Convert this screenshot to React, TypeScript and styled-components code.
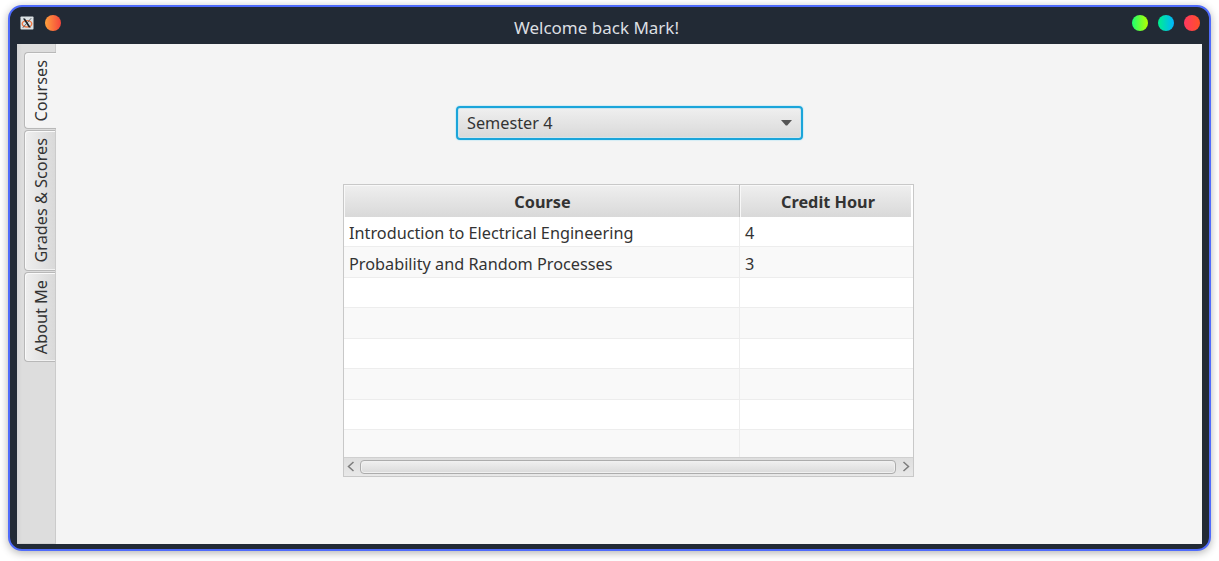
import React from 'react';
import styled, { createGlobalStyle } from 'styled-components';

const GlobalStyle = createGlobalStyle`
  * { box-sizing: border-box; }
  body {
    margin: 0;
    background: #fff;
    overflow: hidden;
    font-family: 'Noto Sans', sans-serif;
    font-size: 16.25px;
    color: #333;
  }
`;

const Desktop = styled.div`
  width: 1219px;
  height: 561px;
  padding: 5px 8px 10px;
`;

const Window = styled.main`
  width: 1203px;
  height: 546px;
  display: flex;
  flex-direction: column;
  padding: 0 7px 5px;
  border: 2px solid #4f6bfb;
  border-radius: 14px;
  background: #222a35;
  box-shadow: 0 2px 8px rgba(0, 0, 0, 0.3);
`;

const TitleBar = styled.header`
  height: 37px;
  flex: none;
  display: grid;
  grid-template-columns: 100px 1fr 100px;
`;

const TitleGroup = styled.div<{ $end?: boolean }>`
  display: flex;
  height: 16px;
  margin-top: 8px;
  gap: 10px;
  padding: ${(p) => (p.$end ? '0 2px 0 0' : '0 0 0 2px')};
  justify-content: ${(p) => (p.$end ? 'flex-end' : 'flex-start')};
`;

const Title = styled.h1`
  margin: 0;
  padding: 9px 26px 0 0;
  font-size: 17px;
  line-height: 24px;
  font-weight: 400;
  text-align: center;
  color: #dcdfe2;
`;

const Dot = styled.span<{ $from: string; $to: string }>`
  width: 16px;
  height: 16px;
  border-radius: 50%;
  background: linear-gradient(90deg, ${(p) => p.$from}, ${(p) => p.$to});
`;

const Body = styled.div`
  flex: 1;
  display: flex;
  background: #f4f4f4;
`;

const TabStrip = styled.nav`
  width: 39px;
  padding: 8px 0 0 7px;
  display: flex;
  flex-direction: column;
  gap: 1px;
  background: linear-gradient(90deg, #d3d3d3, #dddddd 5px);
  border-right: 1px solid #cbcbcb;
  border-bottom: 1px solid #d0d0d0;
`;

const Tab = styled.button<{ $height: number; $active?: boolean }>`
  height: ${(p) => p.$height}px;
  width: ${(p) => (p.$active ? 32 : 31)}px;
  padding: 0 0 0 5px;
  display: flex;
  align-items: center;
  justify-content: flex-start;
  border: 1px solid #b8b8b8;
  border-right: 0;
  border-radius: 4px 0 0 4px;
  background: ${(p) => (p.$active ? '#f4f4f4' : 'linear-gradient(90deg, #efefef, #d9d9d9)')};
  box-shadow: inset 1px 1px 0 #fafafa, inset 0 -1px 0 #f2f2f2;
  font: inherit;
  color: inherit;
`;

const TabLabel = styled.span`
  writing-mode: vertical-rl;
  transform: rotate(180deg);
  line-height: 22px;
  white-space: nowrap;
`;

const Content = styled.section`
  flex: 1;
  display: flex;
  flex-direction: column;
  padding: 62px 0 0 287px;
`;

const Select = styled.button`
  width: 347px;
  height: 34px;
  margin-left: 113px;
  padding: 0 9px;
  display: flex;
  align-items: center;
  justify-content: space-between;
  border: 2px solid #1ba5da;
  border-radius: 4px;
  background: linear-gradient(#efefef, #d9d9d9);
  box-shadow: 0 0 1px 1px #d3edf6, inset 0 0 0 1px #cfe5ed;
  font: inherit;
  color: inherit;
`;

const Arrow = styled.svg`
  margin-bottom: 1px;
`;

const Table = styled.div`
  width: 571px;
  height: 293px;
  margin-top: 44px;
  display: flex;
  flex-direction: column;
  border: 1px solid #c8c8c8;
  background: #fff;
`;

const Row = styled.div<{ $odd?: boolean }>`
  display: grid;
  grid-template-columns: 396px 1fr;
  flex: 0 0 30.5px;
  background: ${(p) => (p.$odd ? '#f9f9f9' : '#fff')};
  border-bottom: 1px solid #ededed;

  &:first-child {
    flex-basis: 30px;
  }
`;

const Cell = styled.div`
  padding-left: 5px;
  padding-top: 3px;
  line-height: 26px;
  border-right: 1px solid #ededed;
  white-space: nowrap;

  & + & {
    border-right: 0;
  }

  ${Row}:nth-child(2) & {
    padding-top: 5px;
    line-height: 24px;
  }
`;

const HeaderRow = styled.div`
  height: 32px;
  flex: none;
  display: grid;
  grid-template-columns: 396px 171px;
`;

const HeaderCell = styled.div`
  padding: 2px 0 0 2px;
  line-height: 30px;
  font-weight: 700;
  text-align: center;
  background: linear-gradient(#efefef, #d9d9d9);
  border-right: 1px solid #c4c4c4;
  box-shadow: inset 1px 1px 0 #f8f8f8;

  & + & {
    padding-left: 5px;
    border-right: 0;
  }
`;

const Rows = styled.div`
  flex: 1;
  min-height: 0;
  overflow: hidden;
  display: flex;
  flex-direction: column;
`;

const ScrollBar = styled.div`
  height: 19px;
  flex: none;
  display: flex;
  align-items: center;
  justify-content: space-between;
  padding: 0 3px 0 2px;
  border-top: 1px solid #d0d0d0;
  background: linear-gradient(#dedede, #e8e8e8);
`;

const Thumb = styled.div`
  width: 536px;
  height: 14px;
  margin-bottom: 1px;
  border: 1px solid #acacac;
  border-radius: 4px;
  background: linear-gradient(#f0f0f0, #dadada);
  box-shadow: inset 0 0 0 1px #f0f0f0;
`;

const AppIcon = () => (
  <svg width="16" height="16" viewBox="0 0 16 16">
    <rect x="1.5" y="1.5" width="13" height="13" rx="0.8" fill="#dbe1e4" />
    <ellipse cx="8" cy="8.8" rx="4.8" ry="3.2" fill="none" stroke="#f07a48" strokeWidth="1.4" />
    <path d="M4 3.6h2l5.8 9h-2z" fill="#1b2026" />
    <path d="M12.2 3.2 3.8 12.8" stroke="#3a4046" strokeWidth="0.8" />
  </svg>
);

const Chevron = ({ left }: { left?: boolean }) => (
  <svg width="9" height="12" viewBox="0 0 9 12">
    <path
      d={left ? 'M7.5 1 2.5 5.5l5 4.5' : 'M2.5 1l5 4.5-5 4.5'}
      fill="none"
      stroke="#7c7c7c"
      strokeWidth="1.5"
    />
  </svg>
);

const courses = [
  ['Introduction to Electrical Engineering', '4'],
  ['Probability and Random Processes', '3'],
  ['', ''],
  ['', ''],
  ['', ''],
  ['', ''],
  ['', ''],
  ['', ''],
];

export default function App() {
  return (
    <Desktop>
      <GlobalStyle />
      <Window>
        <TitleBar>
          <TitleGroup>
            <AppIcon />
            <Dot $from="#ffa03c" $to="#f5453c" />
          </TitleGroup>
          <Title>Welcome back Mark!</Title>
          <TitleGroup $end>
            <Dot $from="#1cff70" $to="#b4ff00" />
            <Dot $from="#00f08c" $to="#00b4ff" />
            <Dot $from="#ff3860" $to="#ff5028" />
          </TitleGroup>
        </TitleBar>
        <Body>
          <TabStrip>
            <Tab $height={77} $active><TabLabel>Courses</TabLabel></Tab>
            <Tab $height={141}><TabLabel>Grades &amp; Scores</TabLabel></Tab>
            <Tab $height={90}><TabLabel>About Me</TabLabel></Tab>
          </TabStrip>
          <Content>
            <Select>
              Semester 4
              <Arrow width="11" height="6" viewBox="0 0 11 6">
                <path d="M0 0h11L6.2 5.6H4.8z" fill="#555" />
              </Arrow>
            </Select>
            <Table>
              <HeaderRow>
                <HeaderCell>Course</HeaderCell>
                <HeaderCell>Credit Hour</HeaderCell>
              </HeaderRow>
              <Rows>
                {courses.map(([name, hours], i) => (
                  <Row key={i} $odd={i % 2 === 1}>
                    <Cell>{name}</Cell>
                    <Cell>{hours}</Cell>
                  </Row>
                ))}
              </Rows>
              <ScrollBar>
                <Chevron left />
                <Thumb />
                <Chevron />
              </ScrollBar>
            </Table>
          </Content>
        </Body>
      </Window>
    </Desktop>
  );
}
